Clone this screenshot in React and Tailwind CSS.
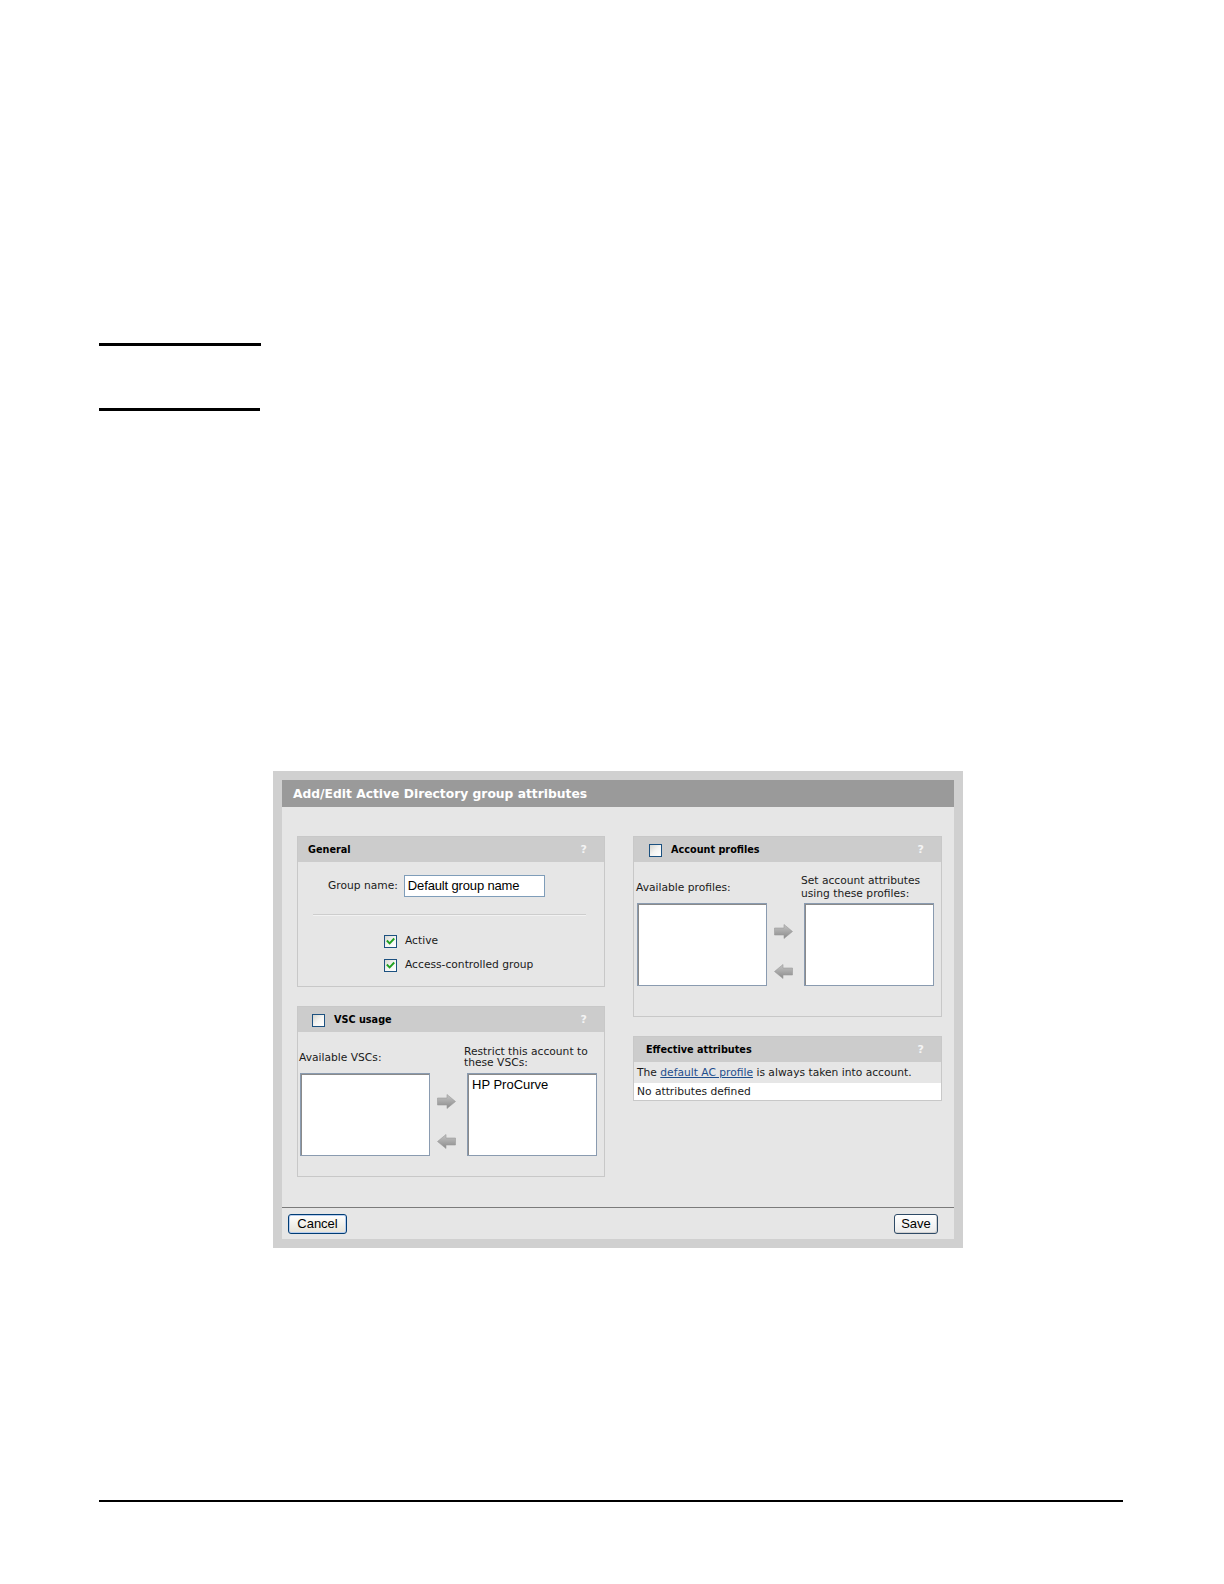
import React from "react";

const V = "font-['DejaVu_Sans',Verdana,sans-serif]";
const A = "font-['Liberation_Sans',Arial,sans-serif]";

function Check({ checked }) {
  return (
    <span className="relative inline-block w-[13px] h-[13px] shrink-0 border border-[#1c5180] bg-gradient-to-br from-[#d6d6d0] via-[#f4f4f2] to-white">
      {checked && (
        <svg viewBox="0 0 11 11" className="absolute left-0 top-0 w-[11px] h-[11px]">
          <path d="M2.5 5.2 L4.6 7.4 L8.6 3.2" fill="none" stroke="#21a121" strokeWidth="1.9" strokeLinecap="square" />
        </svg>
      )}
    </span>
  );
}

function Arrow({ dir }) {
  const d = dir === "right" ? "M0.5 4H10V0.5L18.5 7.5L10 14.5V11H0.5Z" : "M18.5 4H9V0.5L0.5 7.5L9 14.5V11H18.5Z";
  return (
    <svg width="19" height="15" viewBox="0 0 19 15" className="block">
      <defs>
        <linearGradient id="arrowgrad" x1="0" y1="0" x2="0" y2="1">
          <stop offset="0" stopColor="#c4c4c4" />
          <stop offset="0.5" stopColor="#a8a8a8" />
          <stop offset="1" stopColor="#8a8a8a" />
        </linearGradient>
      </defs>
      <path d={d} fill="url(#arrowgrad)" stroke="#9a9a9a" strokeWidth="0.6" />
    </svg>
  );
}

function Help() {
  return <span className={`ml-auto pr-[17px] text-[11px] font-bold text-[#f4f4f4] ${V}`}>?</span>;
}

function ListBox({ children }) {
  return (
    <div className={`w-[130px] h-[83px] bg-white border border-[#8a9bb0] shadow-[inset_1px_1px_0_#8a8a8a] pl-[4px] pt-[3px] text-[13px] leading-[16px] text-black ${A}`}>
      {children}
    </div>
  );
}

function Arrows() {
  return (
    <div className="w-[37px] pl-[7px] pt-[21px] flex flex-col gap-[25px]">
      <Arrow dir="right" />
      <Arrow dir="left" />
    </div>
  );
}

export default function App() {
  return (
    <div className={`w-[1224px] h-[1584px] bg-white overflow-hidden text-[#1a1a1a] ${V}`}>
      <div className="pt-[343px] pl-[99px]">
        <div className="w-[162px] h-[3px] bg-black" />
        <div className="mt-[62px] w-[161px] h-[3px] bg-black" />
      </div>

      <div className="ml-[273px] mt-[360px] w-[690px] h-[477px] border-[9px] border-[#d0d0d0] bg-[#e6e6e6] flex flex-col">
        <div className="h-[27px] bg-[#9a9a9a] flex items-center pl-[11px] pt-[2px]">
          <span className="text-[12.3px] font-bold text-white">Add/Edit Active Directory group attributes</span>
        </div>

        <div className="flex-1 flex pl-[15px] pt-[29px] gap-[28px]">
          {/* Left column */}
          <div className="w-[308px] flex flex-col gap-[19px]">
            <div className="h-[151px] border border-[#c8c8c8] flex flex-col">
              <div className="h-[25px] bg-[#cccccc] flex items-center pl-[10px] pt-[2px]">
                <span className="text-[9.7px] font-bold text-black">General</span>
                <Help />
              </div>
              <div className="pt-[13px] text-[10.7px]">
                <div className="flex items-center h-[22px] pl-[30px]">
                  <span className="pt-[1px]">Group name:</span>
                  <div className={`ml-[6px] w-[141px] h-[22px] bg-white border border-[#7f9db9] pl-[3px] flex items-center text-[13px] tracking-[-0.15px] text-black ${A}`}>
                    Default group name
                  </div>
                </div>
                <div className="mt-[17px] ml-[15px] w-[273px] h-[2px] bg-[#cdcdcd] border-b border-[#f2f2f2]" />
                <div className="mt-[19px] ml-[86px] h-[13px] flex items-center gap-[8px]">
                  <Check checked />
                  <span>Active</span>
                </div>
                <div className="mt-[11px] ml-[86px] h-[13px] flex items-center gap-[8px]">
                  <Check checked />
                  <span>Access-controlled group</span>
                </div>
              </div>
            </div>

            <div className="h-[171px] border border-[#c8c8c8] flex flex-col">
              <div className="h-[25px] bg-[#cccccc] flex items-center pl-[14px] pt-[2px]">
                <Check />
                <span className="ml-[9px] text-[9.7px] font-bold text-black">VSC usage</span>
                <Help />
              </div>
              <div className="pt-[14px] text-[10.7px]">
                <div className="flex items-center h-[22px] pl-[1px] leading-[11px]">
                  <div className="w-[165px]">Available VSCs:</div>
                  <div>Restrict this account to<br />these VSCs:</div>
                </div>
                <div className="mt-[5px] pl-[2px] flex">
                  <ListBox />
                  <Arrows />
                  <ListBox>HP ProCurve</ListBox>
                </div>
              </div>
            </div>
          </div>

          {/* Right column */}
          <div className="w-[309px] flex flex-col gap-[19px]">
            <div className="h-[181px] border border-[#c8c8c8] flex flex-col">
              <div className="h-[25px] bg-[#cccccc] flex items-center pl-[15px] pt-[2px]">
                <Check />
                <span className="ml-[9px] text-[9.7px] font-bold text-black">Account profiles</span>
                <Help />
              </div>
              <div className="pt-[12px] text-[10.7px]">
                <div className="flex items-center h-[26px] pl-[2px] leading-[13px]">
                  <div className="w-[165px]">Available profiles:</div>
                  <div>Set account attributes<br />using these profiles:</div>
                </div>
                <div className="mt-[3px] pl-[3px] flex">
                  <ListBox />
                  <Arrows />
                  <ListBox />
                </div>
              </div>
            </div>

            <div className="border border-[#c8c8c8] flex flex-col">
              <div className="h-[25px] bg-[#cccccc] flex items-center pl-[12px] pt-[2px]">
                <span className="text-[9.7px] font-bold text-black">Effective attributes</span>
                <Help />
              </div>
              <div className="h-[21px] flex items-center pl-[3px] pt-[1px] text-[10.7px]">
                <span>
                  The <span className="text-[#1f4e8c] underline">default AC profile</span> is always taken into account.
                </span>
              </div>
              <div className="h-[17px] bg-white flex items-center pl-[3px] pt-[1px] text-[10.7px]">No attributes defined</div>
            </div>
          </div>
        </div>

        <div className="h-[32px] border-t border-[#7b7b7b] flex items-start justify-between pt-[6px] pl-[6px] pr-[16px]">
          <button className={`w-[59px] h-[20px] rounded-[3px] border border-[#003c74] bg-gradient-to-b from-white to-[#e6e3d8] shadow-[inset_0_0_0_1px_#b7cdee] text-[13px] text-black flex items-center justify-center ${A}`}>
            Cancel
          </button>
          <button className={`w-[44px] h-[20px] rounded-[3px] border border-[#2e4a66] bg-gradient-to-b from-white to-[#ebebeb] shadow-[inset_-1px_-1px_0_#d0d0d0] text-[13px] text-black flex items-center justify-center ${A}`}>
            Save
          </button>
        </div>
      </div>

      <div className="ml-[99px] mt-[252px] w-[1024px] h-[2px] bg-black" />
    </div>
  );
}
